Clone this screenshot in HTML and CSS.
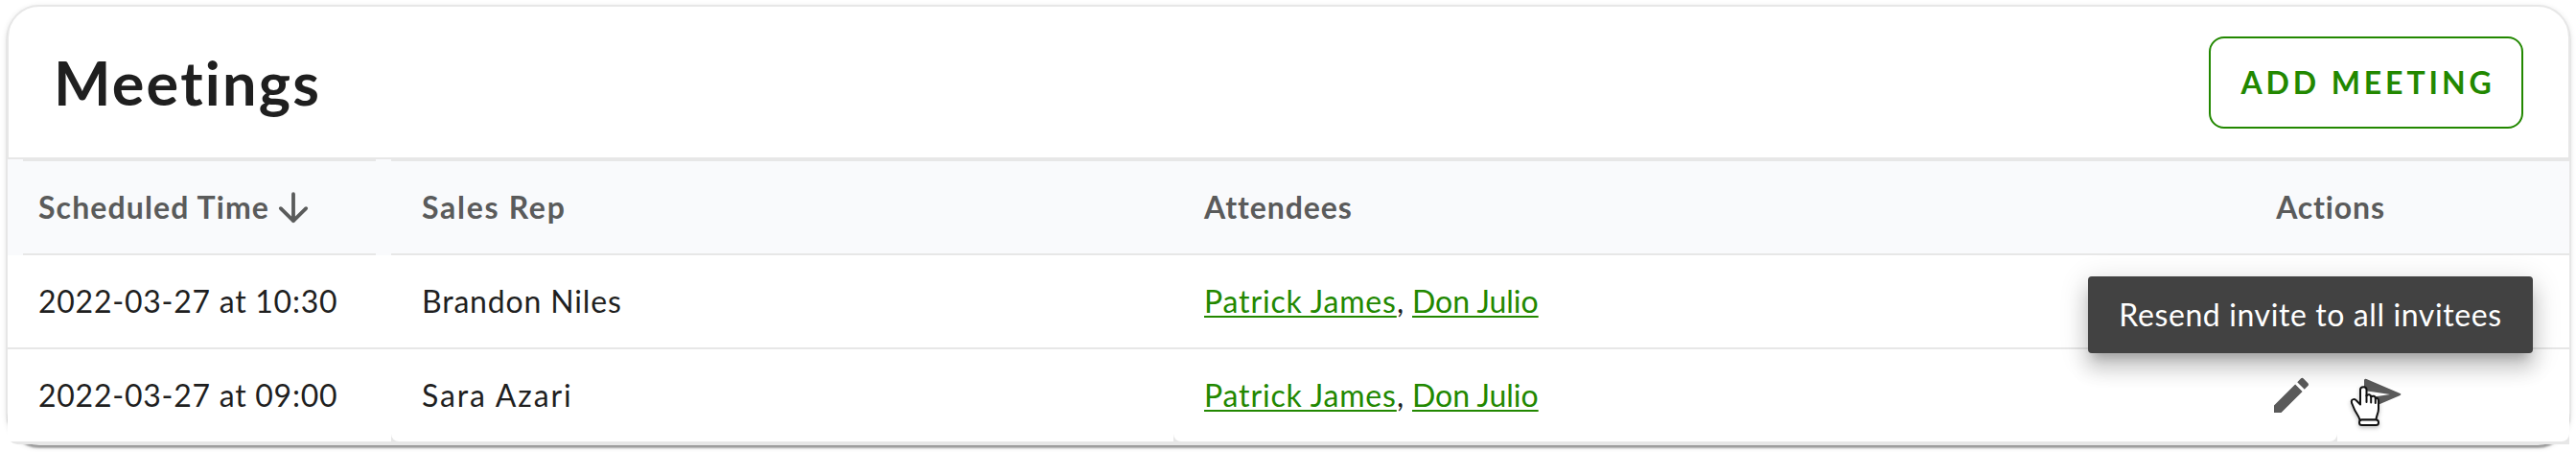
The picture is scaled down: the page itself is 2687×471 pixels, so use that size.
FILE: index.html
```html
<!DOCTYPE html>
<html lang="en">
<head>
<meta charset="utf-8">
<title>Meetings</title>
<link rel="stylesheet" href="styles.css">
</head>
<body>
<main class="card">
  <header class="card-header">
    <h1 class="title">Meetings</h1>
    <button class="add-button">ADD MEETING</button>
  </header>
  <section class="table">
    <div class="row head-row">
      <div class="head-cell sorted"><div class="head-inner"><span class="h-time">Scheduled Time</span>
        <svg class="sort-icon" width="32" height="34" viewBox="0 0 32 34" fill="none" stroke="#5a5b5b" stroke-width="3.8" stroke-linecap="round" stroke-linejoin="round"><path d="M16 3.2V31.2M2.8 18.2L16 31.2L29.2 18.2"/></svg></div></div>
      <div class="head-cell"><span class="h-rep">Sales Rep</span></div>
      <div class="head-cell"><span class="h-att">Attendees</span></div>
      <div class="head-cell centered"><span class="h-act">Actions</span></div>
    </div>
    <div class="row body-row">
      <div class="cell date">2022-03-27 at 10:30</div>
      <div class="cell brandon">Brandon Niles</div>
      <div class="cell"><a class="link patrick">Patrick James</a><span class="comma">,</span><a class="link don">Don Julio</a></div>
      <div class="cell"></div>
    </div>
    <div class="row last-row">
      <div class="cell date">2022-03-27 at 09:00</div>
      <div class="cell sara notch-left">Sara Azari</div>
      <div class="cell notch-left"><a class="link patrick">Patrick James</a><span class="comma">,</span><a class="link don">Don Julio</a></div>
      <div class="actions">
        <div class="action edit">
          <svg width="48" height="48" viewBox="0 0 24 24" fill="#5a5a5a"><path d="M3 17.25V21h3.75L17.81 9.94l-3.75-3.75L3 17.25zM20.71 7.04c.39-.39.39-1.02 0-1.41l-2.34-2.34a.9959.9959 0 0 0-1.41 0l-1.83 1.83 3.75 3.75 1.83-1.83z"/></svg>
        </div>
        <div class="action send">
          <svg width="42" height="38" viewBox="0 0 42 38"><path d="M2 3.5Q2 1 4.5 2L39 16.8Q41.8 18 39 19.2L4.5 34Q2 35 2 32.500Z" fill="#5a5a5a"/><path d="M2 14L29 18L2 22Z" fill="#fff"/></svg>
          <div class="tooltip">Resend invite to all invitees</div>
          <svg class="cursor" width="36" height="50" viewBox="0 0 36 50" fill="#fff" stroke="#111" stroke-width="2" stroke-linecap="round" stroke-linejoin="round"><path d="M11.500 37.500C10.500 33 6.500 29.500 5 24.500C4 22 2.700 20 2.800 18.200C3.100 15.600 6.500 15.500 8 17.500L12 21.500V6C12 2.200 18.500 2.200 18.500 6V12.500C20 10.500 23 11 23.200 13.500C25 12 27.600 12.500 27.800 15C29.500 14.300 31 15.500 31 18V26C31 31 28.500 33 28.500 37.500Z"/><path d="M18.500 12V19M23.200 13.500V19.500M27.800 15V20" fill="none"/><rect x="11" y="37.500" width="20" height="5.600" rx="2.600"/></svg>
        </div>
      </div>
    </div>
  </section>
</main>
</body>
</html>
```
FILE: styles.css
```css
* { box-sizing: border-box; }
body {
  margin: 0;
  padding: 5px 6px 0 7px;
  height: 471px;
  overflow: hidden;
  background: #fff;
  color: #1f1f1f;
  font-family: Lato, sans-serif;
  font-size: 32px;
  line-height: 40px;
}
.card {
  height: 459px;
  border: 2px solid #e7e7e7;
  border-radius: 34px;
  background: #fff;
  box-shadow: 0 4px 2px -1px rgba(0,0,0,.26), 0 2px 2px rgba(0,0,0,.14), 0 2px 6px rgba(0,0,0,.12);
}
.card-header {
  display: flex;
  align-items: center;
  justify-content: space-between;
  height: 159px;
  padding: 0 47px 0 47px;
  border-bottom: 2px solid #e7e7e7;
}
.title { margin: 0; font-size: 63px; line-height: 72px; font-weight: 700; letter-spacing: 2.2px; }
.add-button {
  width: 328px;
  height: 96px;
  padding: 0 0 0 4px;
  border: 2px solid #228800;
  border-radius: 16px;
  background: #fff;
  color: #228800;
  font: 700 32px/40px Lato, sans-serif;
  letter-spacing: 3.9px;
}
.table { margin: 0 -1px; }
.row { display: grid; grid-template-columns: 400px 816px 958px 1fr; }
.head-row { height: 100px; background: #f9fafc; color: #5a5b5b; font-weight: 700; }
.head-cell {
  display: flex;
  align-items: center;
  padding-left: 32px;
  border-top: 2px solid #e7e7e7;
  border-bottom: 2px solid #e7e7e7;
}
.sorted { padding: 0 16px; border: 0; }
.head-inner {
  display: flex;
  align-items: center;
  gap: 9px;
  width: 368px;
  height: 100px;
  padding-left: 16px;
  border-top: 2px solid #e7e7e7;
  border-bottom: 2px solid #e7e7e7;
}
.centered { justify-content: center; padding: 0; }
.h-time { letter-spacing: 1.12px; }
.h-rep { letter-spacing: 1.7px; }
.h-att { letter-spacing: .93px; }
.h-act { letter-spacing: .85px; }
.body-row { height: 98px; border-bottom: 2px solid #e7e7e7; }
.last-row {
  height: 99px;
  padding-bottom: 3px;
  background: #e7e7e7;
  border-bottom-left-radius: 10px;
}
.cell { display: flex; align-items: center; padding-left: 32px; background: #fff; }
.notch-left { border-bottom-left-radius: 8px; }
.date { letter-spacing: .75px; }
.brandon { letter-spacing: .83px; }
.sara { letter-spacing: 1.87px; }
.link {
  color: #228800;
  text-decoration: underline;
  text-decoration-thickness: 2px;
  text-underline-offset: 3px;
  text-decoration-skip-ink: none;
}
.patrick { width: 201px; letter-spacing: .84px; }
.comma { width: 16px; }
.don { letter-spacing: 0; }
.actions { display: grid; grid-template-columns: 256px 1fr; }
.action { display: flex; align-items: center; background: #fff; }
.edit { justify-content: flex-end; padding-right: 24px; border-bottom-right-radius: 8px; }
.send { position: relative; padding-left: 26px; border-bottom-right-radius: 8px; }
.tooltip {
  position: absolute;
  right: 38px;
  bottom: 92px;
  width: 464px;
  height: 80px;
  padding-top: 20px;
  border-radius: 4px;
  background: #424242;
  color: #fff;
  text-align: center;
  letter-spacing: .6px;
  white-space: nowrap;
  box-shadow: 0 10px 10px -6px rgba(0,0,0,.2), 0 16px 20px 2px rgba(0,0,0,.14), 0 6px 28px 4px rgba(0,0,0,.12);
}
.cursor {
  position: absolute;
  left: 12px;
  top: 36px;
  overflow: visible;
  filter: drop-shadow(0 2px 2px rgba(0,0,0,.25));
}
```
